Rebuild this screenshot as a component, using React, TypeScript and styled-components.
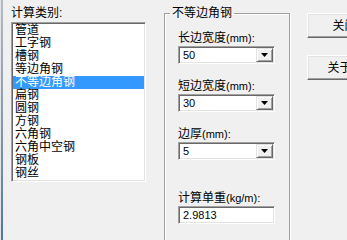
import React from "react";
import styled, { createGlobalStyle } from "styled-components";

const Global = createGlobalStyle`
  html, body { margin: 0; padding: 0; }
  body {
    width: 347px;
    height: 240px;
    overflow: hidden;
    background: #f0f0f0;
    font-family: "Liberation Sans", "Noto Sans CJK SC", sans-serif;
    font-size: 12px;
    color: #000;
  }
`;

const Window = styled.div`
  display: flex;
  align-items: flex-start;
  width: 347px;
  height: 240px;
  overflow: hidden;
  background: #f0f0f0;
`;

const Edge = styled.div`
  align-self: stretch;
  width: 3px;
  flex: none;
  border-left: 1px solid #e4e4e4;
  box-sizing: border-box;
  background: linear-gradient(180deg, #b4bac4 0%, #8a9cb8 45%, #4c76b2 100%);
`;

const LeftColumn = styled.div`
  display: flex;
  flex-direction: column;
  margin-left: 8px;
  width: 135px;
  flex: none;
`;

const Caption = styled.div`
  height: 14px;
  line-height: 14px;
  margin-top: 6px;
  margin-bottom: 2px;
  white-space: nowrap;
`;

const Latin = styled.span`
  font-size: 11px;
`;

const ListBox = styled.div`
  box-sizing: border-box;
  width: 135px;
  height: 160px;
  background: #fff;
  border-style: solid;
  border-width: 1px;
  border-color: #a0a0a0 #ffffff #ffffff #a0a0a0;
  box-shadow: inset 1px 1px 0 #696969, inset -1px -1px 0 #e3e3e3;
  padding: 1px;
  display: flex;
  flex-direction: column;
  overflow: hidden;
`;

const ListItem = styled.div<{ $selected?: boolean }>`
  height: 13px;
  line-height: 13px;
  padding-left: 2px;
  white-space: nowrap;
  flex: none;
  background: ${(p) => (p.$selected ? "#3399ff" : "transparent")};
  color: ${(p) => (p.$selected ? "#ffffff" : "#000000")};
`;

const Group = styled.fieldset`
  margin: 6px 0 0 18px;
  padding: 0;
  width: 126px;
  height: 260px;
  box-sizing: border-box;
  flex: none;
  border: 1px solid #a0a0a0;
  box-shadow: inset 1px 1px 0 #ffffff, 1px 1px 0 #ffffff;
  min-width: 0;
`;

const Legend = styled.legend`
  margin-left: 5px;
  padding: 0 2px;
  height: 14px;
  line-height: 14px;
  white-space: nowrap;
`;

const GroupBody = styled.div`
  display: flex;
  flex-direction: column;
  padding: 11px 0 0 13px;
`;

const FieldLabel = styled.div<{ $top?: number }>`
  height: 14px;
  line-height: 14px;
  margin-top: ${(p) => p.$top ?? 0}px;
  margin-bottom: 1px;
  white-space: nowrap;
`;

const Sunken = styled.div`
  box-sizing: border-box;
  width: 97px;
  height: 18px;
  background: #fff;
  border-style: solid;
  border-width: 1px;
  border-color: #a0a0a0 #ffffff #ffffff #a0a0a0;
  box-shadow: inset 1px 1px 0 #696969, inset -1px -1px 0 #e3e3e3;
  padding: 1px;
  display: flex;
  align-items: stretch;
`;

const Combo = styled(Sunken)`
  margin-bottom: 15px;
`;

const FieldText = styled.div`
  flex: 1;
  padding-left: 3px;
  line-height: 14px;
  font-size: 11px;
  white-space: nowrap;
  overflow: hidden;
`;

const DropButton = styled.div`
  box-sizing: border-box;
  width: 17px;
  flex: none;
  background: #f0f0f0;
  border-style: solid;
  border-width: 1px;
  border-color: #e3e3e3 #696969 #696969 #e3e3e3;
  box-shadow: inset 1px 1px 0 #ffffff, inset -1px -1px 0 #a0a0a0;
  display: flex;
  align-items: center;
  justify-content: center;
`;

const Edit = styled(Sunken)``;

const ButtonColumn = styled.div`
  display: flex;
  flex-direction: column;
  gap: 17px;
  margin: 13px 0 0 17px;
  flex: none;
`;

const PushButton = styled.button`
  box-sizing: border-box;
  width: 75px;
  height: 25px;
  padding: 0;
  font: inherit;
  line-height: 14px;
  color: #000;
  background: #f0f0f0;
  border-style: solid;
  border-width: 1px;
  border-color: #ffffff #696969 #696969 #ffffff;
  box-shadow: inset -1px -1px 0 #a0a0a0, inset 1px 1px 0 #e3e3e3;
  white-space: nowrap;
`;

const Arrow = () => (
  <svg width="7" height="4" viewBox="0 0 7 4">
    <path d="M0 0H7L3.5 4Z" fill="#000" />
  </svg>
);

const items = [
  "管道",
  "工字钢",
  "槽钢",
  "等边角钢",
  "不等边角钢",
  "扁钢",
  "圆钢",
  "方钢",
  "六角钢",
  "六角中空钢",
  "钢板",
  "钢丝",
];

const fields = [
  { name: "长边宽度", unit: "(mm):", value: "50" },
  { name: "短边宽度", unit: "(mm):", value: "30" },
  { name: "边厚", unit: "(mm):", value: "5" },
];

export default function App() {
  return (
    <>
      <Global />
      <Window>
        <Edge />
        <LeftColumn>
          <Caption>计算类别:</Caption>
          <ListBox>
            {items.map((it) => (
              <ListItem key={it} $selected={it === "不等边角钢"}>
                {it}
              </ListItem>
            ))}
          </ListBox>
        </LeftColumn>
        <Group>
          <Legend>不等边角钢</Legend>
          <GroupBody>
            {fields.map((f) => (
              <React.Fragment key={f.name}>
                <FieldLabel>
                  {f.name}
                  <Latin>{f.unit}</Latin>
                </FieldLabel>
                <Combo>
                  <FieldText>{f.value}</FieldText>
                  <DropButton>
                    <Arrow />
                  </DropButton>
                </Combo>
              </React.Fragment>
            ))}
            <FieldLabel $top={16}>
              计算单重<Latin>(kg/m):</Latin>
            </FieldLabel>
            <Edit>
              <FieldText>2.9813</FieldText>
            </Edit>
          </GroupBody>
        </Group>
        <ButtonColumn>
          <PushButton>关闭</PushButton>
          <PushButton>关于...</PushButton>
        </ButtonColumn>
      </Window>
    </>
  );
}
